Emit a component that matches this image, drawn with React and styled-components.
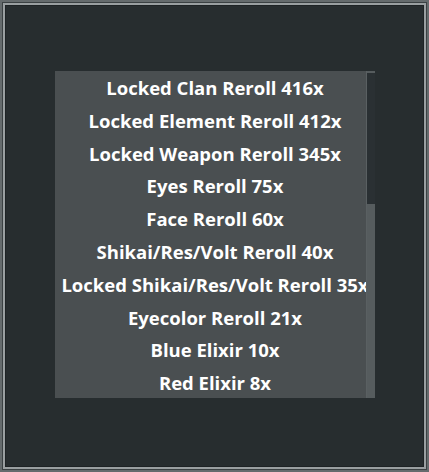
import React from 'react'
import styled, { createGlobalStyle } from 'styled-components'

const Global = createGlobalStyle`
    html, body {
        margin: 0;
        padding: 0;
        background: #272d2f;
    }
`

const Frame = styled.div`
    box-sizing: border-box;
    width: 429px;
    height: 472px;
    background: #272d2f;
    border: 2px solid #656b6d;
    box-shadow: inset 0 0 0 1px #3b4143, inset 0 0 0 3px #9a9fa1, inset 0 0 0 4px #1e2325;
    padding: 69px 52px 72px 53px;
    font-family: "Open Sans", "Liberation Sans", sans-serif;
`

const Panel = styled.div`
    position: relative;
    width: 320px;
    height: 327px;
    background: #4a4f51;
    overflow: hidden;
`

const List = styled.ul`
    list-style: none;
    margin: 0;
    padding: 1px 0 0;
    display: flex;
    flex-direction: column;
`

const Item = styled.li`
    height: 32.8px;
    line-height: 32.8px;
    text-align: center;
    white-space: nowrap;
    color: #ffffff;
    font-weight: 700;
    font-size: 18.5px;
`

const Track = styled.div`
    position: absolute;
    top: 0;
    right: 0;
    width: 8px;
    height: 100%;
    background: #565c5e;
    border-left: 1px solid #5a6062;
`

const Thumb = styled.div`
    position: absolute;
    top: 2px;
    right: 0;
    width: 8px;
    height: 131px;
    background: #2a3033;
`

const items = [
    'Locked Clan Reroll 416x',
    'Locked Element Reroll 412x',
    'Locked Weapon Reroll 345x',
    'Eyes Reroll 75x',
    'Face Reroll 60x',
    'Shikai/Res/Volt Reroll 40x',
    'Locked Shikai/Res/Volt Reroll 35x',
    'Eyecolor Reroll 21x',
    'Blue Elixir 10x',
    'Red Elixir 8x',
]

export default function App () {
    return (
        <>
            <Global />
            <Frame>
                <Panel>
                    <List>
                        {items.map(t => <Item key={t}>{t}</Item>)}
                    </List>
                    <Track />
                    <Thumb />
                </Panel>
            </Frame>
        </>
    )
}
